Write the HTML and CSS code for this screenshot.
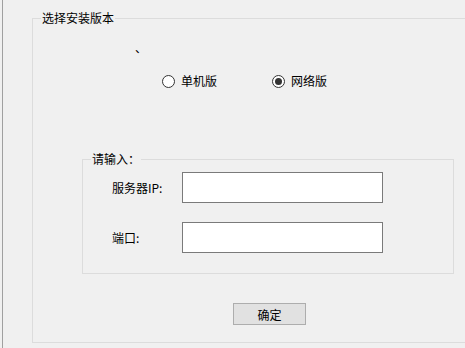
FILE: index.html
```html
<!DOCTYPE html>
<html lang="zh-CN">
<head>
    <meta charset="UTF-8">
    <meta name="viewport" content="width=device-width, initial-scale=1.0">
    <title>选择安装版本</title>
    <link rel="stylesheet" href="styles.css">
</head>
<body>
    <div class="window">
        <fieldset class="group outer">
            <legend>选择安装版本</legend>
            <div class="mark">、</div>
            <div class="radios">
                <label class="radio"><input type="radio" name="mode" value="single"> 单机版</label>
                <label class="radio"><input type="radio" name="mode" value="network" checked> 网络版</label>
            </div>
            <fieldset class="group inner">
                <legend>请输入：</legend>
                <div class="fields">
                    <label for="serverIp">服务器IP:</label>
                    <input type="text" id="serverIp">
                    <label for="port">端口:</label>
                    <input type="text" id="port">
                </div>
            </fieldset>
            <button type="button" class="ok">确定</button>
        </fieldset>
    </div>
</body>
</html>
```

FILE: styles.css
```css
html, body {
    margin: 0;
    height: 100%;
    overflow: hidden;
}
body {
    font-family: "Noto Sans CJK SC", "Liberation Sans", sans-serif;
    font-size: 12px;
    color: #000;
    background: #f0f0f0;
}
.window {
    height: 348px;
    margin-left: 2px;
    border-left: 1px solid #a0a0a0;
    padding-top: 11px;
    box-sizing: border-box;
}
.group {
    margin: 0;
    padding: 0;
    border: 1px solid #dcdcdc;
    min-width: 0;
}
.group legend {
    margin-left: 8px;
    padding: 0 1px;
    line-height: 14px;
}
.outer {
    margin-left: 29px;
    width: 433px;
    box-sizing: border-box;
    border-right: none;
    padding-bottom: 17px;
}
.mark {
    margin: 16px 0 0 102px;
    line-height: 14px;
    height: 14px;
}
.radios {
    display: flex;
    gap: 55px;
    margin: 19px 0 0 129px;
    line-height: 14px;
}
.radio {
    display: flex;
    align-items: center;
    gap: 6px;
}
.radio input {
    appearance: none;
    -webkit-appearance: none;
    margin: 0;
    width: 13px;
    height: 13px;
    border: 1px solid #333;
    border-radius: 50%;
    background: #fff;
    box-sizing: border-box;
    display: grid;
    place-items: center;
}
.radio input:checked::after {
    content: "";
    width: 7px;
    height: 7px;
    border-radius: 50%;
    background: #333;
}
.inner {
    margin: 64px 0 0 49px;
    width: 372px;
    box-sizing: border-box;
    padding: 6px 0 20px;
}
.fields {
    display: grid;
    grid-template-columns: 99px 201px;
    row-gap: 19px;
    align-items: center;
}
.fields label {
    padding-left: 29px;
}
.fields input {
    height: 31px;
    margin: 0;
    border: 1px solid #7a7a7a;
    background: #fff;
    box-sizing: border-box;
    font: inherit;
    padding: 0 4px;
}
.ok {
    display: block;
    margin: 29px 0 0 200px;
    width: 73px;
    height: 22px;
    padding: 0;
    border: 1px solid #adadad;
    background: #e1e1e1;
    font: inherit;
    color: #000;
}
```
